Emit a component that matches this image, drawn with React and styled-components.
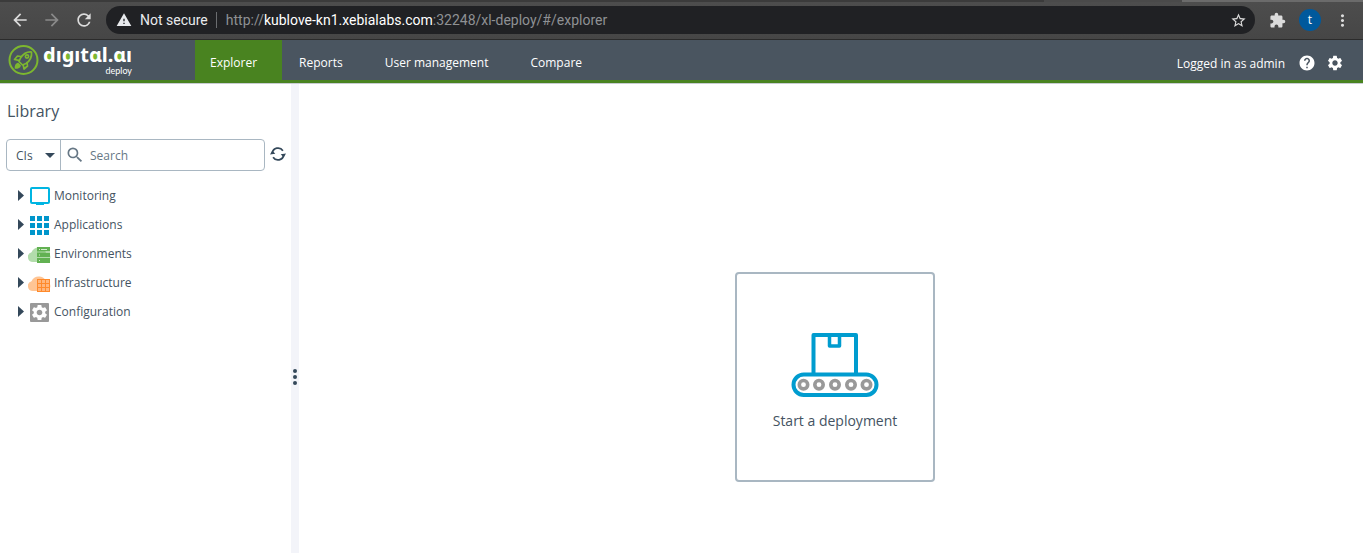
import React from "react";
import styled, { createGlobalStyle } from "styled-components";
import {
  MdArrowBack,
  MdArrowForward,
  MdRefresh,
  MdWarning,
  MdStarBorder,
  MdExtension,
  MdMoreVert,
  MdHelp,
  MdSettings,
  MdSearch,
} from "react-icons/md";

const GlobalStyle = createGlobalStyle`
  * { box-sizing: border-box; }
  body {
    margin: 0;
    background: #fff;
    color: #445362;
    font-family: "Open Sans", "Noto Sans", sans-serif;
    font-size: 12px;
  }
  button, input, select { font: inherit; color: inherit; }
`;

const Page = styled.div`
  display: flex;
  flex-direction: column;
  min-height: 100vh;
`;

/* Browser toolbar */
const TabEdge = styled.div`
  display: flex;
  height: 2px;
  background: #4a4a4a;
`;
const TabSlice = styled.div`
  flex: ${(p) => p.$grow};
  background: ${(p) => p.$color};
`;
const BrowserBar = styled.div`
  display: flex;
  align-items: center;
  height: 38px;
  padding: 0 0 1px 8px;
  background: linear-gradient(#4d4d4d, #464646);
  border-bottom: 1px solid #2b2b2b;
`;
const BarButton = styled.button`
  display: flex;
  align-items: center;
  justify-content: center;
  flex: none;
  width: ${(p) => p.$width || 32}px;
  height: 28px;
  padding: 0;
  border: 0;
  background: none;
  color: ${(p) => (p.$dim ? "#8a8a8a" : "#dcdcdc")};
  font-size: 20px;
`;
const NavButtons = styled.div`
  display: flex;
  width: 98px;
  margin-left: -4px;
  margin-right: 4px;
`;
const AddressBar = styled.div`
  display: flex;
  align-items: center;
  flex: 1;
  min-width: 0;
  height: 28px;
  padding-left: 10px;
  border-radius: 14px;
  background: #202124;
  color: #8f9194;
  font-family: Roboto, "Open Sans", sans-serif;
  font-size: 14px;
  white-space: nowrap;
`;
const Security = styled.span`
  display: flex;
  align-items: center;
  gap: 8px;
  padding-right: 8px;
  margin-right: 9px;
  border-right: 1px solid #6b6d70;
  line-height: 16px;
  color: #e8eaed;
`;
const Url = styled.span`
  flex: 1;
  overflow: hidden;
`;
const Host = styled.span`
  color: #fff;
`;
const Avatar = styled.span`
  width: 22px;
  height: 22px;
  border-radius: 50%;
  background: #00599c;
  color: #fff;
  font-size: 12px;
  line-height: 22px;
`;

/* Application header */
const Header = styled.header`
  display: flex;
  height: 43px;
  background: #4a5560;
  border-bottom: 3px solid #498320;
  color: #fff;
`;
const Brand = styled.a`
  display: flex;
  flex: none;
  gap: 3px;
  width: 195px;
  padding-left: 8px;
  color: #fff;
  text-decoration: none;
`;
const BrandText = styled.span`
  display: flex;
  flex-direction: column;
  align-items: flex-end;
  padding-top: 4px;
`;
const Wordmark = styled.span`
  font-family: "Noto Sans", sans-serif;
  font-size: 20px;
  font-weight: 700;
  line-height: 22px;
`;
/* A round letter whose counter is filled with a green dot */
const Bowl = styled.span`
  background: radial-gradient(circle at 50% 60%, #7db72f 3px, transparent 4px);
`;
const Product = styled.span`
  font-family: Lato, sans-serif;
  font-size: 9px;
  line-height: 10px;
`;
const Nav = styled.nav`
  display: flex;
  gap: 2px;
  flex: 1;
`;
const NavLink = styled.a`
  padding: 0 25px 0 15px;
  background: ${(p) => (p.$active ? "#498320" : "none")};
  color: #fff;
  line-height: 46px;
  height: 40px;
  text-decoration: none;
  white-space: nowrap;
`;
const UserArea = styled.div`
  display: flex;
  align-items: center;
  gap: 10px;
  padding: 6px 19px 0 0;
`;
const UserName = styled.span`
  padding-right: 3px;
`;
const HeaderButton = styled.button`
  display: flex;
  padding: 0;
  border: 0;
  background: none;
  font-size: 18px;
`;

/* Library panel */
const Body = styled.div`
  display: flex;
  flex: 1;
  border-top: 1px solid #c8ccd2;
`;
const Sidebar = styled.aside`
  flex: none;
  width: 291px;
  padding: 15px 5px 0 6px;
`;
const Title = styled.h1`
  margin: 0 0 16px 1px;
  font-size: 16px;
  font-weight: 400;
  line-height: 24px;
`;
const SearchRow = styled.div`
  display: flex;
  align-items: center;
  gap: 5px;
`;
const SearchGroup = styled.div`
  display: flex;
  align-items: center;
  flex: 1;
  height: 32px;
  border: 1px solid #a9b7c2;
  border-radius: 4px;
`;
const KindBox = styled.label`
  display: flex;
  align-items: center;
  width: 54px;
  height: 30px;
  padding: 0 5px 0 9px;
  border-right: 1px solid #a9b7c2;
`;
const KindSelect = styled.select`
  flex: 1;
  min-width: 0;
  padding: 0;
  border: 0;
  appearance: none;
  background: none;
`;
const SearchBox = styled.label`
  display: flex;
  align-items: center;
  gap: 5px;
  flex: 1;
  padding-left: 4px;
  color: #667785;
  font-size: 20px;
`;
const SearchInput = styled.input`
  flex: 1;
  min-width: 0;
  padding: 0;
  border: 0;
  background: none;
  font-size: 12px;
  &::placeholder { color: #667785; opacity: 1; }
`;
const RefreshButton = styled.button`
  display: flex;
  padding: 0 0 2px;
  border: 0;
  background: none;
`;
const Tree = styled.ul`
  margin: 10px 0 0;
  padding: 0 0 0 12px;
  list-style: none;
`;
const TreeItem = styled.li`
  display: flex;
  align-items: center;
  height: 29px;
`;
const TreeToggle = styled.button`
  display: flex;
  align-items: center;
  padding: 0;
  border: 0;
  background: none;
  svg + svg { margin: 2px 3px 0 4px; }
`;

const Splitter = styled.div`
  display: flex;
  flex-direction: column;
  align-items: center;
  flex: none;
  width: 8px;
  padding-top: 285px;
  background: #f3f4f9;
`;
const Main = styled.main`
  display: flex;
  justify-content: center;
  align-items: flex-start;
  flex: 1;
  padding: 188px 0 0 8px;
`;
const DeployCard = styled.button`
  display: flex;
  flex-direction: column;
  align-items: center;
  justify-content: center;
  gap: 14px;
  width: 200px;
  height: 210px;
  padding: 8px 0 0;
  border: 2px solid #a9b7c2;
  border-radius: 4px;
  background: #fff;
  font-size: 14px;
  line-height: 20px;
`;

const RocketBadge = () => (
  <svg width="32" height="38" viewBox="0 0 32 38" aria-hidden="true">
    <circle cx="15.500" cy="20" r="14" fill="none" stroke="#7db72f" strokeWidth="2" />
    <g fill="none" stroke="#7db72f" strokeWidth="1.700" strokeLinejoin="round" strokeLinecap="round">
      <path d="M23.500 12c-5-.5-8 1.500-11 6l-1.500 3.500 3.500 3.500 3.500-1.500c4.500-3 6-7 5.500-11.500z" />
      <path d="M13 16.500l-3.500-.5-3 3.500 4.500.8M19 22.500l.5 3.500-3.500 3-.8-4.200" />
      <circle cx="19" cy="16.500" r="1.600" />
      <path d="M10 23.500c-2 .5-2.500 2-2.500 4.500 2.500 0 4-.5 4.500-2.500z" fill="#7db72f" />
    </g>
  </svg>
);

const CaretDown = () => (
  <svg width="10" height="5" viewBox="0 0 10 5"><path d="M0 0h10L5 5z" fill="#34485a" /></svg>
);
const CaretRight = () => (
  <svg width="6" height="12" viewBox="0 0 6 12"><path d="M0 0l6 5.500L0 11z" fill="#34485a" /></svg>
);
const SyncIcon = () => (
  <svg width="16" height="16" viewBox="0 0 16 16">
    <path d="M2.300 7a5.800 5.800 0 0 1 10.600-2.300M13.700 9a5.800 5.800 0 0 1-10.600 2.300" fill="none" stroke="#34485a" strokeWidth="1.700" />
    <path d="M0 8.500l2.300-4 3 3.300zM16 7.500l-2.300 4-3-3.300z" fill="#34485a" />
  </svg>
);

const Cloud = ({ color }) => (
  <path d="M5 18a5 5 0 0 1-1.500-9.800C5 4.500 9 2.500 13 3.800c3 .7 4.500 2.700 5 5.200 4 0 5 3 4 6-.5 2-2 3-4 3z" fill={color} />
);

const icons = {
  Monitoring: (
    <>
      <rect x="3" y="2" width="18" height="15" rx="1" fill="none" stroke="#00b5e2" strokeWidth="2" />
      <path d="M8 17h8v2H8z" fill="#00b5e2" />
    </>
  ),
  Applications: (
    <path
      d="M2 1h5v5H2zM9 1h5v5H9zM16 1h5v5h-5zM2 8h5v5H2zM9 8h5v5H9zM16 8h5v5h-5zM2 15h5v5H2zM9 15h5v5H9zM16 15h5v5h-5z"
      fill="#0096cb"
    />
  ),
  Environments: (
    <>
      <Cloud color="#b2dcab" />
      <path d="M9 3h13v4.500H9zM9 8.500h13V13H9zM9 14h13v5H9z" fill="#62b152" />
      <path d="M11 5.500h1M13 5.500h6M11 11h1M11 16.500h1" stroke="#d5edcf" />
    </>
  ),
  Infrastructure: (
    <>
      <Cloud color="#ffc594" />
      <rect x="9" y="6" width="13" height="13" fill="#ff8a2b" />
      <path d="M10 7h3v3h-3zM14 7h3v3h-3zM18 7h3v3h-3zM10 11h3v3h-3zM14 11h3v3h-3zM18 11h3v3h-3zM10 15h3v3h-3zM14 15h3v3h-3zM18 15h3v3h-3z" fill="#ffb67c" />
    </>
  ),
  Configuration: (
    <>
      <rect x="2" y="1" width="19" height="19" rx="1" fill="#999" />
      <MdSettings x="2" y="1" size="19" color="#fff" />
    </>
  ),
};

const Conveyor = () => (
  <svg width="88" height="66" viewBox="0 0 88 66">
    <g fill="none" stroke="#009ccf" strokeWidth="4">
      <path d="M22.500 43V4H65v39" strokeLinejoin="round" />
      <path d="M38.500 4v11h10V4" strokeLinejoin="round" strokeWidth="3.500" />
      <rect x="2.500" y="43.500" width="83" height="20.500" rx="10.250" />
    </g>
    <g fill="none" stroke="#999" strokeWidth="3.600">
      {[12.5, 28, 44, 60, 75.5].map((x) => (
        <circle key={x} cx={x} cy="53.700" r="4.200" />
      ))}
    </g>
  </svg>
);

export default function App() {
  return (
    <Page>
      <GlobalStyle />
      <TabEdge>
        <TabSlice $grow={1044} $color="#3b3b3b" />
        <TabSlice $grow={138} $color="#4a4a4a" />
        <TabSlice $grow={181} $color="#6b6b6b" />
      </TabEdge>
      <BrowserBar>
        <NavButtons>
          <BarButton aria-label="Back"><MdArrowBack /></BarButton>
          <BarButton aria-label="Forward" $dim><MdArrowForward /></BarButton>
          <BarButton aria-label="Reload"><MdRefresh /></BarButton>
        </NavButtons>
        <AddressBar>
          <Security><MdWarning size={16} />Not secure</Security>
          <Url>http://<Host>kublove-kn1.xebialabs.com</Host>:32248/xl-deploy/#/explorer</Url>
          <BarButton aria-label="Bookmark" $width={34}><MdStarBorder size={17} /></BarButton>
        </AddressBar>
        <BarButton aria-label="Extensions" $width={44}><MdExtension size={17} /></BarButton>
        <BarButton aria-label="Profile" $width={22}><Avatar>t</Avatar></BarButton>
        <BarButton aria-label="Menu" $width={42}><MdMoreVert size={19} /></BarButton>
      </BrowserBar>
      <Header>
        <Brand href="#/" aria-label="digital.ai deploy">
          <RocketBadge />
          <BrandText>
            <Wordmark>
              <Bowl>d</Bowl>ı<Bowl>g</Bowl>ıt<Bowl>ɑ</Bowl>l.<Bowl>ɑ</Bowl>ı
            </Wordmark>
            <Product>deploy</Product>
          </BrandText>
        </Brand>
        <Nav>
          <NavLink href="#/explorer" $active>Explorer</NavLink>
          <NavLink href="#/reports">Reports</NavLink>
          <NavLink href="#/users">User management</NavLink>
          <NavLink href="#/compare">Compare</NavLink>
        </Nav>
        <UserArea>
          <UserName>Logged in as admin</UserName>
          <HeaderButton aria-label="Help"><MdHelp /></HeaderButton>
          <HeaderButton aria-label="Settings"><MdSettings /></HeaderButton>
        </UserArea>
      </Header>
      <Body>
        <Sidebar>
          <Title>Library</Title>
          <SearchRow>
            <SearchGroup>
              <KindBox>
                <KindSelect aria-label="Item kind"><option>CIs</option></KindSelect>
                <CaretDown />
              </KindBox>
              <SearchBox>
                <MdSearch />
                <SearchInput type="text" placeholder="Search" aria-label="Search" />
              </SearchBox>
            </SearchGroup>
            <RefreshButton aria-label="Refresh"><SyncIcon /></RefreshButton>
          </SearchRow>
          <Tree>
            {Object.entries(icons).map(([name, icon]) => (
              <TreeItem key={name}>
                <TreeToggle>
                  <CaretRight />
                  <svg width="23" height="21" viewBox="0 0 23 21">{icon}</svg>
                  {name}
                </TreeToggle>
              </TreeItem>
            ))}
          </Tree>
        </Sidebar>
        <Splitter>
          <svg width="4" height="16" viewBox="0 0 4 16" fill="#34485a">
            <circle cx="2" cy="2" r="2" />
            <circle cx="2" cy="8" r="2" />
            <circle cx="2" cy="14" r="2" />
          </svg>
        </Splitter>
        <Main>
          <DeployCard><Conveyor />Start a deployment</DeployCard>
        </Main>
      </Body>
    </Page>
  );
}
